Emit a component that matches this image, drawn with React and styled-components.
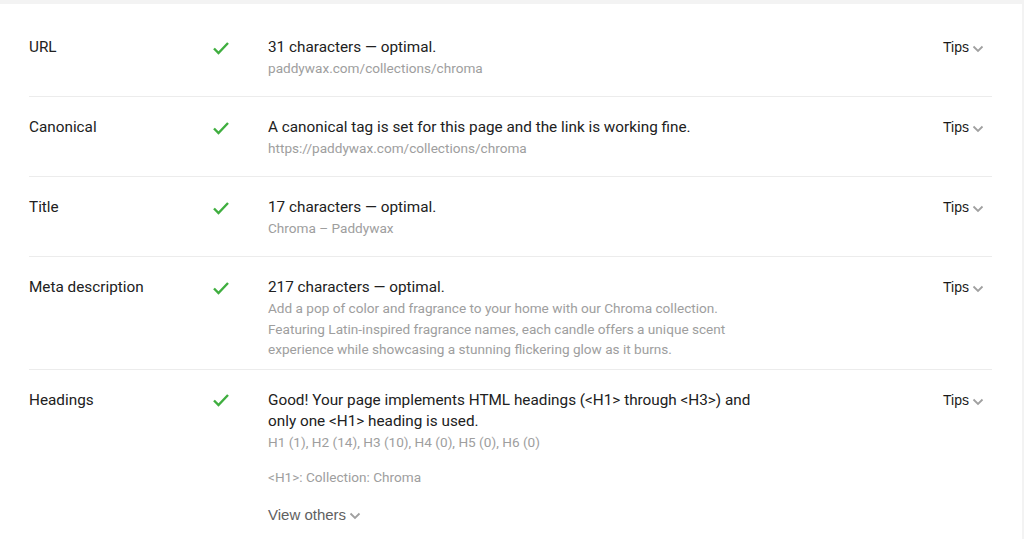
import React from "react";
import styled, { createGlobalStyle } from "styled-components";

const GlobalStyle = createGlobalStyle`
  html, body {
    margin: 0;
    padding: 0;
    background: #f3f3f3;
  }
  body {
    font-family: Roboto, "Liberation Sans", Arial, sans-serif;
    color: #212121;
  }
`;

const Page = styled.div`
  padding: 4px 2px 0 0;
  height: 539px;
  box-sizing: border-box;
  overflow: hidden;
`;

const Card = styled.div`
  background: #fff;
  padding: 13px 30px 0 29px;
  height: 100%;
  box-sizing: border-box;
`;

const Row = styled.div`
  display: flex;
  align-items: flex-start;
  min-height: 80px;
  box-sizing: border-box;
  padding: 20px 0 9px;
  border-bottom: 1px solid ${(p) => (p.last ? "transparent" : "#ececec")};
`;

const Label = styled.div`
  width: 183px;
  flex-shrink: 0;
  font-size: 15.3px;
  line-height: 21px;
  color: #212121;
`;

const Status = styled.div`
  width: 56px;
  flex-shrink: 0;
  height: 21px;
  display: flex;
  align-items: center;
`;

const Content = styled.div`
  flex: 1;
`;

const Inner = styled.div`
  max-width: 492px;
`;

const Main = styled.div`
  font-size: 15.3px;
  line-height: 21px;
  color: #212121;
`;

const Sub = styled.div`
  font-size: 13.6px;
  line-height: 20.5px;
  color: #9e9e9e;
  margin-top: ${(p) => p.gap || 0}px;
`;

const Toggle = styled.div`
  display: inline-flex;
  align-items: center;
  gap: 3px;
  font-family: "Liberation Sans", Arial, sans-serif;
  font-size: ${(p) => (p.small ? "14px" : "15px")};
  line-height: 21px;
  color: ${(p) => (p.muted ? "#616161" : "#1a1a1a")};
  margin-top: ${(p) => p.gap || 0}px;
  cursor: pointer;
`;

const Tips = styled.div`
  flex-shrink: 0;
  padding-right: 8px;
`;

const Check = () => (
  <svg width="18" height="14" viewBox="0 0 18 14">
    <path d="M2 7.5l4.5 4.5L16 2" fill="none" stroke="#3fae3f" strokeWidth="2.4" />
  </svg>
);

const Chevron = () => (
  <svg width="12" height="8" viewBox="0 0 12 8" style={{ marginTop: 3 }}>
    <path d="M1.5 1.5l4.5 4.5 4.5-4.5" fill="none" stroke="#a0a0a0" strokeWidth="1.8" />
  </svg>
);

const rows = [
  {
    label: "URL",
    main: "31 characters — optimal.",
    sub: ["paddywax.com/collections/chroma"],
  },
  {
    label: "Canonical",
    main: "A canonical tag is set for this page and the link is working fine.",
    sub: ["https://paddywax.com/collections/chroma"],
  },
  {
    label: "Title",
    main: "17 characters — optimal.",
    sub: ["Chroma – Paddywax"],
  },
  {
    label: "Meta description",
    main: "217 characters — optimal.",
    sub: [
      "Add a pop of color and fragrance to your home with our Chroma collection. Featuring Latin-inspired fragrance names, each candle offers a unique scent experience while showcasing a stunning flickering glow as it burns.",
    ],
  },
  {
    label: "Headings",
    main: "Good! Your page implements HTML headings (<H1> through <H3>) and only one <H1> heading is used.",
    sub: ["H1 (1), H2 (14), H3 (10), H4 (0), H5 (0), H6 (0)"],
    extra: "<H1>: Collection: Chroma",
    others: true,
  },
];

export default function App() {
  return (
    <>
      <GlobalStyle />
      <Page>
        <Card>
          {rows.map((r, i) => (
            <Row key={r.label} last={i === rows.length - 1}>
              <Label>{r.label}</Label>
              <Status>
                <Check />
              </Status>
              <Content>
                <Inner>
                  <Main>{r.main}</Main>
                  {r.sub.map((s) => (
                    <Sub key={s}>{s}</Sub>
                  ))}
                  {r.extra && <Sub gap={15}>{r.extra}</Sub>}
                  {r.others && (
                    <Toggle muted gap={16}>
                      View others <Chevron />
                    </Toggle>
                  )}
                </Inner>
              </Content>
              <Tips>
                <Toggle small>
                  Tips <Chevron />
                </Toggle>
              </Tips>
            </Row>
          ))}
        </Card>
      </Page>
    </>
  );
}
